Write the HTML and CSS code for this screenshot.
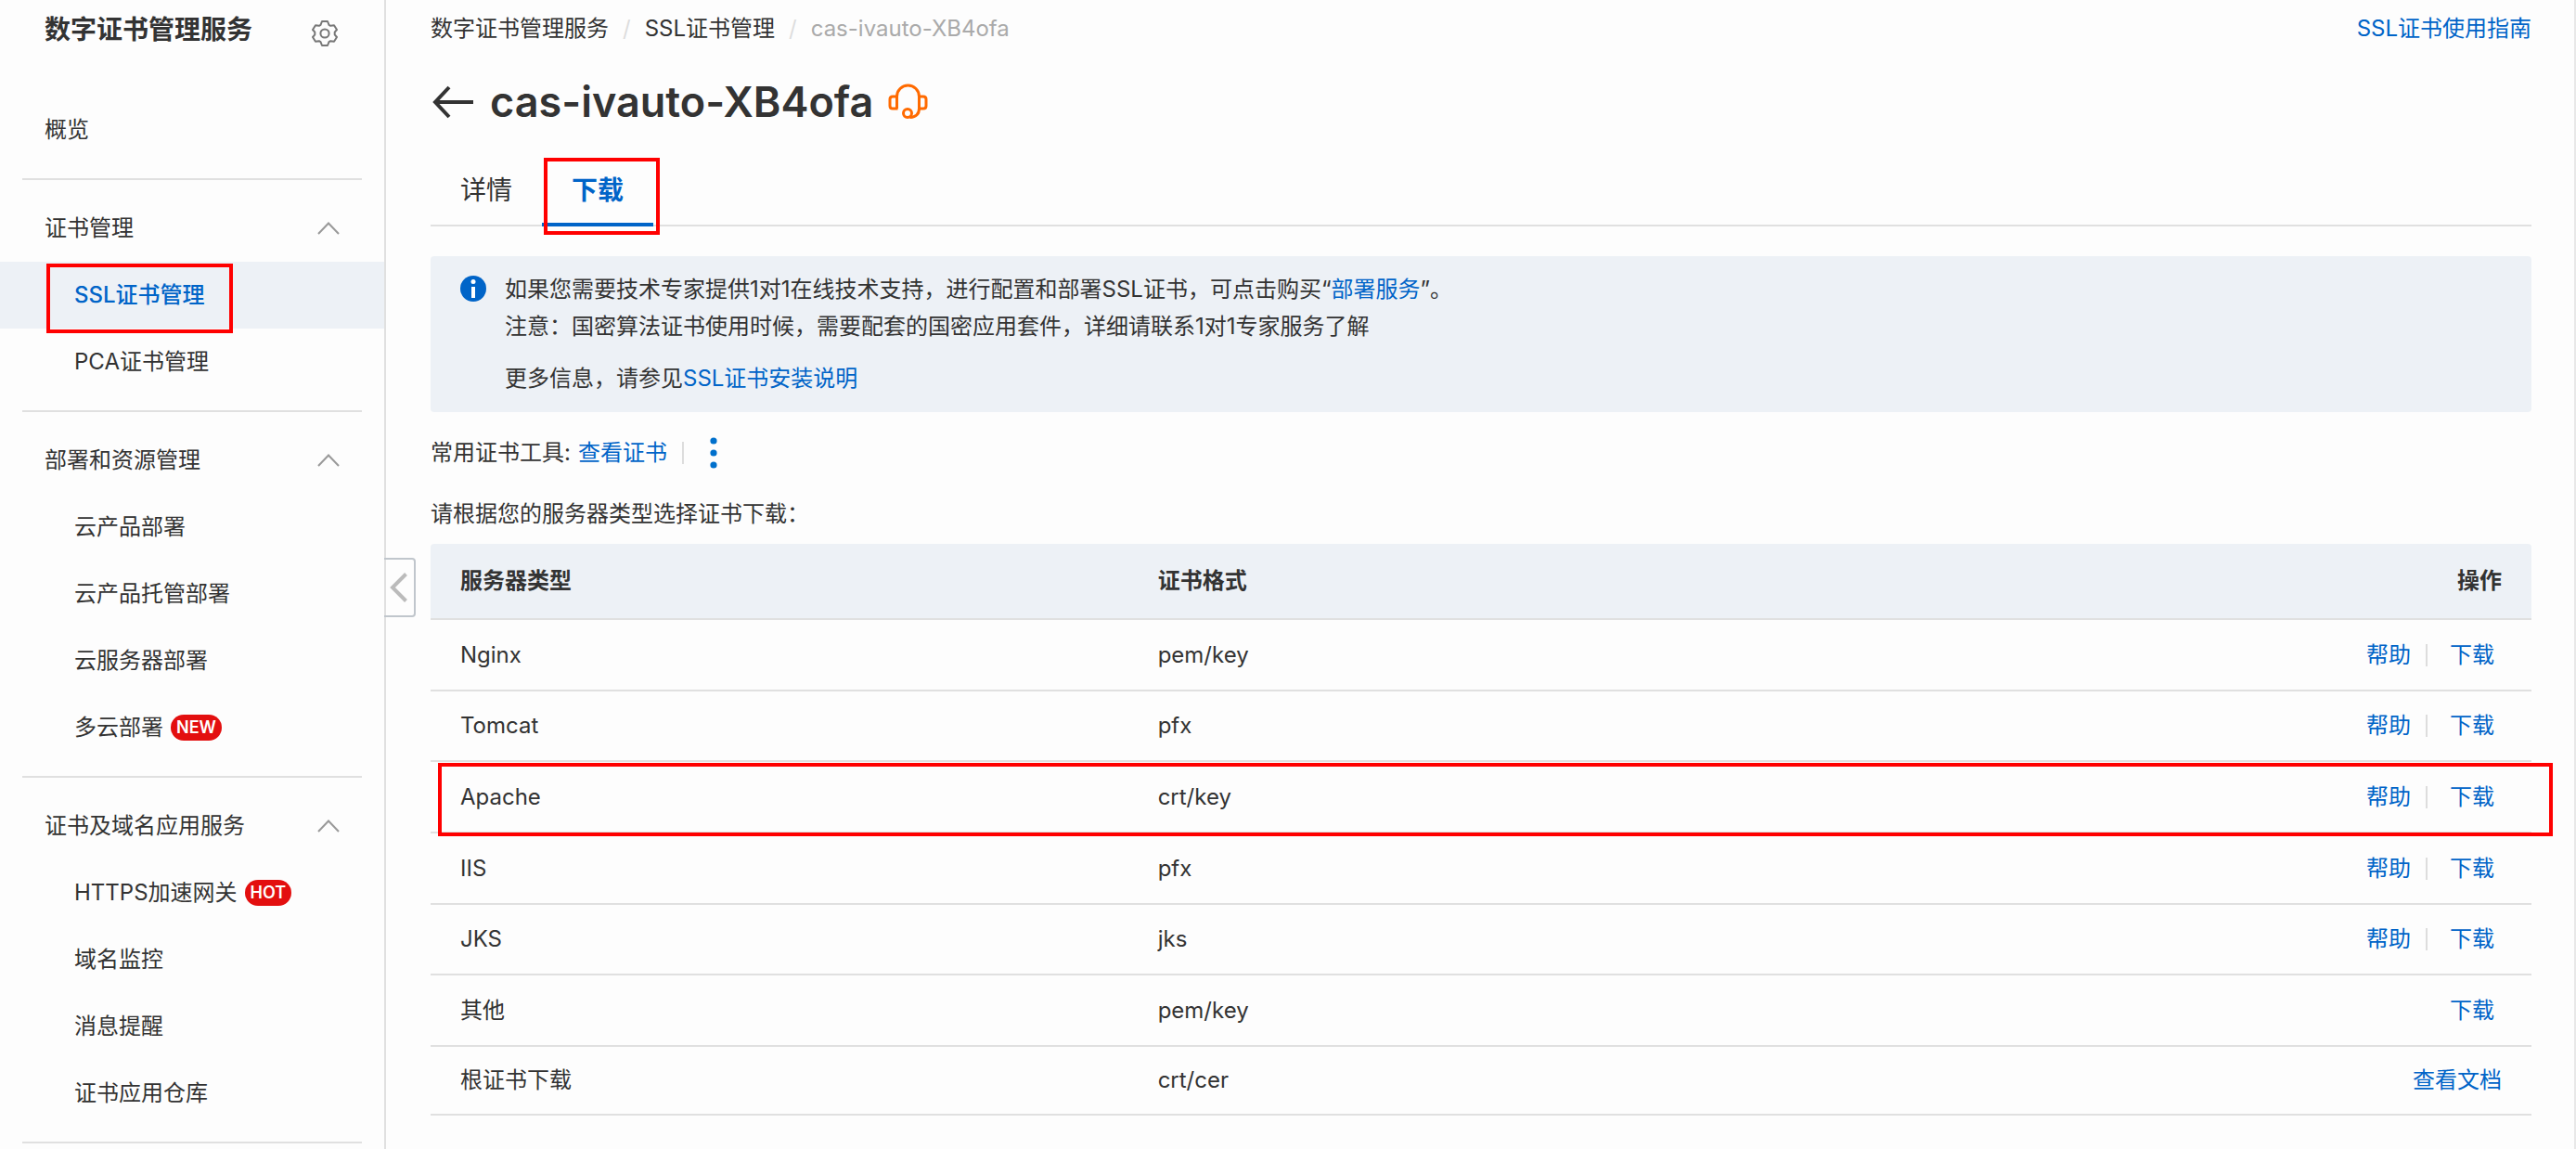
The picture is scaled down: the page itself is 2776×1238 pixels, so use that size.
FILE: index.html
```html
<!DOCTYPE html>
<html lang="zh-CN">
<head>
    <meta charset="UTF-8">
    <meta name="viewport" content="width=device-width, initial-scale=1.0">
    <title>数字证书管理服务</title>
    <link rel="stylesheet" href="styles.css">
</head>
<body>
    <div class="layout">
        <aside class="sidebar">
            <div class="sidebar-header">
                <h2>数字证书管理服务</h2>
                <button type="button" class="icon-button" aria-label="设置">
                    <svg class="gear" viewBox="0 0 28 28">
                        <path d="M11 1h6l1.500 3.800 1.700 1 3.800-.500L27 10l-2.300 2.700v2.600L27 18l-3 4.700-3.800-.500-1.700 1L17 27h-6l-1.500-3.800-1.700-1-3.800.500L1 18l2.300-2.700v-2.600L1 10l3-4.700 3.800.500 1.700-1z" />
                        <circle cx="14" cy="14" r="4.600" />
                    </svg>
                </button>
            </div>

            <nav>
                <ul class="menu">
                    <li><a href="#" class="menu-link">概览</a></li>
                </ul>

                <div class="menu-group">
                    <button type="button" class="group-title">
                        证书管理
                        <svg class="chevron" viewBox="0 0 24 14"><path d="M1 13 12 1.500 23 13" /></svg>
                    </button>
                    <ul class="menu">
                        <li class="active">
                            <a href="#" class="menu-link sub">SSL证书管理</a>
                            <span class="mark mark-menu"></span>
                        </li>
                        <li><a href="#" class="menu-link sub">PCA证书管理</a></li>
                    </ul>
                </div>

                <div class="menu-group">
                    <button type="button" class="group-title">
                        部署和资源管理
                        <svg class="chevron" viewBox="0 0 24 14"><path d="M1 13 12 1.500 23 13" /></svg>
                    </button>
                    <ul class="menu">
                        <li><a href="#" class="menu-link sub">云产品部署</a></li>
                        <li><a href="#" class="menu-link sub">云产品托管部署</a></li>
                        <li><a href="#" class="menu-link sub">云服务器部署</a></li>
                        <li><a href="#" class="menu-link sub">多云部署<span class="badge">NEW</span></a></li>
                    </ul>
                </div>

                <div class="menu-group last">
                    <button type="button" class="group-title">
                        证书及域名应用服务
                        <svg class="chevron" viewBox="0 0 24 14"><path d="M1 13 12 1.500 23 13" /></svg>
                    </button>
                    <ul class="menu">
                        <li><a href="#" class="menu-link sub">HTTPS加速网关<span class="badge">HOT</span></a></li>
                        <li><a href="#" class="menu-link sub">域名监控</a></li>
                        <li><a href="#" class="menu-link sub">消息提醒</a></li>
                        <li><a href="#" class="menu-link sub">证书应用仓库</a></li>
                    </ul>
                </div>
            </nav>

            <button type="button" class="collapse" aria-label="收起菜单">
                <svg viewBox="0 0 20 32"><path d="M17.500 1.500 3 16l14.500 14.500" /></svg>
            </button>
        </aside>

        <main class="content">
            <div class="topbar">
                <nav class="breadcrumb">
                    <a href="#">数字证书管理服务</a>
                    <span class="slash">/</span>
                    <a href="#">SSL证书管理</a>
                    <span class="slash">/</span>
                    <span class="current">cas-ivauto-XB4ofa</span>
                </nav>
                <a href="#" class="link">SSL证书使用指南</a>
            </div>

            <div class="page-title">
                <button type="button" class="icon-button" aria-label="返回">
                    <svg class="back" viewBox="0 0 48 36"><path d="M20 2 5 18l15 16M5 18h41" /></svg>
                </button>
                <h1>cas-ivauto-XB4ofa</h1>
                <button type="button" class="icon-button" aria-label="在线客服">
                    <svg class="headset" viewBox="0 0 44 40">
                        <path d="M9.500 27V14a12 12 0 0 1 24 0v13c0 5-3 9-10 9.500" />
                        <path d="M9.500 14H5q-3 0-3 3v7q0 3 3 3h5.500M33.500 14H38q3 0 3 3v7q0 3-3 3h-4.500" />
                        <circle cx="21" cy="32" r="4.500" />
                    </svg>
                </button>
            </div>

            <div class="tabs" role="tablist">
                <button type="button" class="tab" role="tab">详情</button>
                <button type="button" class="tab selected" role="tab" aria-selected="true">下载<span class="mark mark-tab"></span></button>
            </div>

            <div class="notice">
                <svg class="info" viewBox="0 0 28 28">
                    <circle cx="14" cy="14" r="14" fill="#0064c8" />
                    <circle cx="14" cy="6.500" r="2.500" fill="#fff" />
                    <path d="M12 12h4v12h-4z" fill="#fff" />
                </svg>
                <div class="notice-text">
                    <p>如果您需要技术专家提供1对1在线技术支持，进行配置和部署SSL证书，可点击购买“<a href="#" class="link">部署服务</a>”。<br>注意：国密算法证书使用时候，需要配套的国密应用套件，详细请联系1对1专家服务了解</p>
                    <p>更多信息，请参见<a href="#" class="link">SSL证书安装说明</a></p>
                </div>
            </div>

            <div class="tools">
                <span>常用证书工具:</span>
                <a href="#" class="link">查看证书</a>
                <span class="divider"></span>
                <button type="button" class="icon-button" aria-label="更多">
                    <svg class="more" viewBox="0 0 8 34"><circle cx="4" cy="4" r="3.600" /><circle cx="4" cy="17" r="3.600" /><circle cx="4" cy="30" r="3.600" /></svg>
                </button>
            </div>

            <p class="hint">请根据您的服务器类型选择证书下载：</p>

            <table class="servers">
                <thead>
                    <tr><th>服务器类型</th><th>证书格式</th><th>操作</th></tr>
                </thead>
                <tbody>
                    <tr>
                        <td>Nginx</td>
                        <td>pem/key</td>
                        <td><div class="actions"><a href="#" class="link">帮助</a><span class="divider"></span><button type="button" class="download">下载</button></div></td>
                    </tr>
                    <tr>
                        <td>Tomcat</td>
                        <td>pfx</td>
                        <td><div class="actions"><a href="#" class="link">帮助</a><span class="divider"></span><button type="button" class="download">下载</button></div></td>
                    </tr>
                    <tr class="highlight">
                        <td>Apache<span class="mark mark-row"></span></td>
                        <td>crt/key</td>
                        <td><div class="actions"><a href="#" class="link">帮助</a><span class="divider"></span><button type="button" class="download">下载</button></div></td>
                    </tr>
                    <tr>
                        <td>IIS</td>
                        <td>pfx</td>
                        <td><div class="actions"><a href="#" class="link">帮助</a><span class="divider"></span><button type="button" class="download">下载</button></div></td>
                    </tr>
                    <tr>
                        <td>JKS</td>
                        <td>jks</td>
                        <td><div class="actions"><a href="#" class="link">帮助</a><span class="divider"></span><button type="button" class="download">下载</button></div></td>
                    </tr>
                    <tr>
                        <td>其他</td>
                        <td>pem/key</td>
                        <td><div class="actions"><button type="button" class="download">下载</button></div></td>
                    </tr>
                    <tr>
                        <td>根证书下载</td>
                        <td>crt/cer</td>
                        <td><div class="actions"><a href="#" class="link">查看文档</a></div></td>
                    </tr>
                </tbody>
            </table>
        </main>
    </div>
</body>
</html>
```

FILE: styles.css
```css
* {
    box-sizing: border-box;
}
body {
    margin: 0;
    font-family: Inter, "Noto Sans CJK SC", sans-serif;
    font-size: 24px;
    line-height: 40px;
    color: #333;
    background-color: #fdfdfd;
}
h1, h2, p, ul {
    margin: 0;
    padding: 0;
}
ul {
    list-style: none;
}
a {
    color: inherit;
    text-decoration: none;
}
button {
    padding: 0;
    border: none;
    background: none;
    font: inherit;
    color: inherit;
    cursor: pointer;
}
svg {
    display: block;
    fill: none;
}
.link {
    color: #0064c8;
}
.link:hover {
    text-decoration: underline;
}
.layout {
    display: flex;
    min-height: 100vh;
    border-right: 2px solid #e8e8e8;
}

/* Sidebar */
.sidebar {
    position: relative;
    flex: 0 0 416px;
    border-right: 2px solid #e0e0e0;
}
.sidebar-header {
    display: flex;
    justify-content: space-between;
    align-items: center;
    height: 64px;
    margin-bottom: 40px;
    padding: 0 50px 0 48px;
}
h2 {
    font-size: 28px;
    font-weight: 600;
}
.gear {
    width: 28px;
    height: 28px;
    margin-top: 8px;
    stroke: #777;
    stroke-width: 2;
    stroke-linejoin: round;
}
.menu-link {
    display: flex;
    align-items: center;
    height: 72px;
    padding-left: 48px;
}
.menu-link.sub {
    padding-left: 80px;
}
.menu-group::before,
.menu-group.last::after {
    content: "";
    display: block;
    height: 2px;
    margin: 16px 24px;
    background-color: #e0e0e0;
}
.menu-group.last::after {
    margin-bottom: 0;
}
.group-title {
    display: flex;
    justify-content: space-between;
    align-items: center;
    width: 100%;
    height: 72px;
    padding: 0 48px;
}
.chevron {
    width: 24px;
    height: 14px;
    stroke: #999;
    stroke-width: 2;
}
.menu .active {
    position: relative;
    color: #0064c8;
    background-color: #edf1f6;
    font-weight: 500;
}
.badge {
    height: 28px;
    margin-left: 8px;
    padding: 0 6px;
    border-radius: 14px;
    background-color: #e30f0f;
    color: #fff;
    font-size: 18px;
    font-weight: 600;
    line-height: 28px;
}
.collapse {
    position: absolute;
    top: 601px;
    left: 100%;
    width: 34px;
    height: 64px;
    padding-left: 6px;
    border: 2px solid #c0c6cc;
    border-left: none;
    border-radius: 0 4px 4px 0;
}
.collapse svg {
    width: 20px;
    height: 32px;
    stroke: #bbb;
    stroke-width: 4;
}

/* Content */
.content {
    flex: 1;
    padding: 0 46px 0 48px;
}
.topbar {
    display: flex;
    justify-content: space-between;
    align-items: center;
    height: 62px;
}
.breadcrumb {
    display: flex;
    gap: 15px;
}
.slash {
    color: #ddd;
}
.current {
    color: #aaa;
}
.page-title {
    display: flex;
    align-items: center;
    gap: 16px;
    height: 96px;
    margin-bottom: 2px;
}
h1 {
    font-size: 45px;
    font-weight: 600;
    line-height: 64px;
}
.back {
    width: 48px;
    height: 36px;
    stroke: #333;
    stroke-width: 4;
}
.headset {
    width: 44px;
    height: 40px;
    stroke: #ff6a00;
    stroke-width: 3;
}
.tabs {
    display: flex;
    height: 84px;
    margin-bottom: 32px;
    border-bottom: 2px solid #e0e0e0;
}
.tab {
    height: 84px;
    padding: 10px 32px 0;
    border-bottom: 4px solid transparent;
    font-size: 28px;
}
.tab.selected {
    position: relative;
    border-bottom-color: #0064c8;
    color: #0064c8;
    font-weight: 600;
}
.notice {
    display: flex;
    gap: 20px;
    margin-bottom: 24px;
    padding: 16px 32px;
    border-radius: 4px;
    background-color: #edf1f6;
}
.info {
    flex: none;
    width: 28px;
    height: 28px;
    margin-top: 5px;
}
.notice-text p + p {
    margin-top: 16px;
}
.tools {
    display: flex;
    align-items: center;
    gap: 8px;
    margin-bottom: 26px;
}
.divider {
    width: 2px;
    height: 24px;
    margin: 0 16px;
    background-color: #ddd;
}
.tools .divider {
    margin: 0 20px 0 8px;
}
.more {
    width: 8px;
    height: 34px;
    fill: #0070cc;
}
.hint {
    margin-bottom: 12px;
}

/* Server table */
.servers {
    width: 100%;
    border-collapse: separate;
    border-spacing: 0;
    table-layout: fixed;
}
.servers th,
.servers td {
    height: 77px;
    padding: 0 32px;
    border-bottom: 2px solid #e0e0e0;
    text-align: left;
}
.servers th {
    height: 82px;
    background-color: #edf1f6;
    font-weight: 600;
}
.servers th:first-child {
    width: 33.2%;
    border-top-left-radius: 4px;
}
.servers th:last-child {
    border-top-right-radius: 4px;
    text-align: right;
}
.servers tr:nth-child(3n + 2) td {
    height: 76px;
}
.servers tr:last-child td {
    height: 74px;
}
.highlight {
    position: relative;
}
.actions {
    display: flex;
    justify-content: flex-end;
    align-items: center;
}
.download {
    padding: 0 8px;
    color: #0064c8;
}

/* Red frames drawn over the steps to follow */
.mark {
    position: absolute;
    border: 4px solid #f00;
    pointer-events: none;
}
.mark-menu {
    top: 2px;
    left: 50px;
    width: 201px;
    height: 75px;
}
.mark-tab {
    top: 10px;
    left: 2px;
    width: 125px;
    height: 83px;
}
.mark-row {
    top: 1px;
    right: -23px;
    bottom: -3px;
    left: 8px;
}
```
